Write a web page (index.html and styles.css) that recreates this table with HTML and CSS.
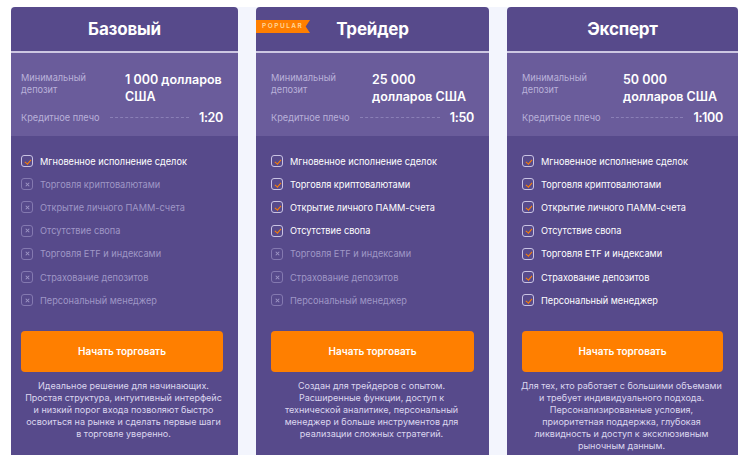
FILE: index.html
```html
<!DOCTYPE html>
<html lang="ru">
<head>
<meta charset="utf-8">
<link rel="stylesheet" href="styles.css">
</head>
<body>
<div class="plans">
  <div class="card">
    <div class="head"><h2>Базовый</h2></div>
    <div class="stats">
      <div class="row"><span class="lbl">Минимальный депозит</span><span class="val">1 000 долларов США</span></div>
      <div class="lev"><span class="lbl">Кредитное плечо</span><span class="dash"></span><span class="levv">1:20</span></div>
    </div>
    <ul class="feats">
      <li class="on"><span class="box"></span>Мгновенное исполнение сделок</li>
      <li><span class="box"></span>Торговля криптовалютами</li>
      <li><span class="box"></span>Открытие личного ПАММ-счета</li>
      <li><span class="box"></span>Отсутствие свопа</li>
      <li><span class="box"></span>Торговля ETF и индексами</li>
      <li><span class="box"></span>Страхование депозитов</li>
      <li><span class="box"></span>Персональный менеджер</li>
    </ul>
    <button class="btn">Начать торговать</button>
    <p class="desc">Идеальное решение для начинающих. Простая структура, интуитивный интерфейс и низкий порог входа позволяют быстро освоиться на рынке и сделать первые шаги в торговле уверенно.</p>
  </div>
  <div class="card wide">
    <div class="head"><span class="badge">POPULAR</span><h2>Трейдер</h2></div>
    <div class="stats">
      <div class="row"><span class="lbl">Минимальный депозит</span><span class="val">25 000 долларов США</span></div>
      <div class="lev"><span class="lbl">Кредитное плечо</span><span class="dash"></span><span class="levv">1:50</span></div>
    </div>
    <ul class="feats">
      <li class="on"><span class="box"></span>Мгновенное исполнение сделок</li>
      <li class="on"><span class="box"></span>Торговля криптовалютами</li>
      <li class="on"><span class="box"></span>Открытие личного ПАММ-счета</li>
      <li class="on"><span class="box"></span>Отсутствие свопа</li>
      <li><span class="box"></span>Торговля ETF и индексами</li>
      <li><span class="box"></span>Страхование депозитов</li>
      <li><span class="box"></span>Персональный менеджер</li>
    </ul>
    <button class="btn">Начать торговать</button>
    <p class="desc narrow">Создан для трейдеров с опытом. Расширенные функции, доступ к технической аналитике, персональный менеджер и больше инструментов для реализации сложных стратегий.</p>
  </div>
  <div class="card wide">
    <div class="head"><h2>Эксперт</h2></div>
    <div class="stats">
      <div class="row"><span class="lbl">Минимальный депозит</span><span class="val">50 000 долларов США</span></div>
      <div class="lev"><span class="lbl">Кредитное плечо</span><span class="dash"></span><span class="levv">1:100</span></div>
    </div>
    <ul class="feats">
      <li class="on"><span class="box"></span>Мгновенное исполнение сделок</li>
      <li class="on"><span class="box"></span>Торговля криптовалютами</li>
      <li class="on"><span class="box"></span>Открытие личного ПАММ-счета</li>
      <li class="on"><span class="box"></span>Отсутствие свопа</li>
      <li class="on"><span class="box"></span>Торговля ETF и индексами</li>
      <li class="on"><span class="box"></span>Страхование депозитов</li>
      <li class="on"><span class="box"></span>Персональный менеджер</li>
    </ul>
    <button class="btn">Начать торговать</button>
    <p class="desc">Для тех, кто работает с большими объемами и требует индивидуального подхода. Персонализированные условия, приоритетная поддержка, глубокая ликвидность и доступ к эксклюзивным рыночным данным.</p>
  </div>
</div>
</body>
</html>
```

FILE: styles.css
```css
* { box-sizing: border-box; }
html, body { margin: 0; padding: 0; background: #ffffff; }
body { padding: 7px 12px 0 11px; font-family: Inter, "Noto Sans", sans-serif; }
.plans {
  display: grid;
  grid-template-columns: 227px 233px 231px;
  gap: 18px;
  background: #f3f5fd;
  height: 448px;
}
.card {
  background: #574a8b;
  border-radius: 4px 4px 0 0;
  color: #fff;
  display: flex;
  flex-direction: column;
  overflow: hidden;
}
.head {
  position: relative;
  height: 46px;
  display: flex;
  align-items: center;
  justify-content: center;
  border-bottom: 2px solid #cdc7e2;
}
.head h2 {
  margin: 0;
  font-size: 17px;
  font-weight: 700;
  letter-spacing: -0.2px;
}
.badge {
  position: absolute;
  left: 0;
  top: 13px;
  height: 13px;
  width: 54px;
  background: #ff7f00;
  color: #ffd79c;
  font-size: 6.5px;
  font-weight: 600;
  letter-spacing: 1.5px;
  line-height: 13px;
  padding-left: 6px;
  clip-path: polygon(0 0, 100% 0, 92% 50%, 100% 100%, 0 100%);
}
.stats {
  background: #6a5c9b;
  padding: 18px 15px 0 10px;
  height: 83px;
}
.wide .stats { padding-left: 15px; }
.row { display: flex; }
.lbl {
  font-size: 9.2px;
  color: #b9b1d9;
  line-height: 12px;
  letter-spacing: 0;
}
.row .lbl { width: 104px; flex: none; padding-top: 1px; padding-right: 30px; }
.wide .row .lbl { width: 101px; padding-right: 27px; }
.val {
  font-size: 12.5px;
  font-weight: 600;
  line-height: 17px;
  letter-spacing: 0;
}
.lev {
  display: flex;
  align-items: center;
  margin-top: 5px;
}
.dash {
  flex: 1;
  border-top: 1px dashed #8a7fb6;
  margin: 0 10px 0 10px;
}
.levv { font-size: 12.5px; font-weight: 600; letter-spacing: -0.3px; }
.feats {
  list-style: none;
  margin: 0;
  padding: 13.5px 0 0 10px;
}
.wide .feats { padding-left: 15px; }
.feats li {
  display: flex;
  align-items: center;
  height: 23.2px;
  font-size: 9.2px;
  color: #9f97c6;
  letter-spacing: 0;
}
.feats li.on { color: #ffffff; }
.box {
  width: 12px;
  height: 12px;
  border: 1px solid #8479b0;
  border-radius: 3px;
  margin-right: 7px;
  position: relative;
  flex: none;
}
.feats li .box::before,
.feats li .box::after {
  content: "";
  position: absolute;
  left: 5px;
  top: 2.5px;
  width: 1px;
  height: 5px;
  background: #9f97c6;
  transform: rotate(45deg);
}
.feats li .box::after { transform: rotate(-45deg); }
.feats li.on .box { border-color: #c9c3e3; }
.feats li.on .box::before {
  left: 4px;
  top: 1.5px;
  width: 2.5px;
  height: 5px;
  background: none;
  border-right: 1.3px solid #ff7f00;
  border-bottom: 1.3px solid #ff7f00;
  transform: rotate(40deg);
}
.feats li.on .box::after { display: none; }
.btn {
  margin: 19px 15px 0 10px;
  height: 41px;
  flex: none;
  border: 0;
  border-radius: 4px;
  background: #ff7f00;
  color: #fff;
  font-family: inherit;
  font-size: 10px;
  font-weight: 600;
  letter-spacing: 0;
}
.wide .btn { margin-left: 15px; }
.desc {
  margin: 8px 14px 0 12px;
  text-align: center;
  font-size: 9px;
  line-height: 12px;
  color: #dcd7ef;
  letter-spacing: 0;
}
.desc.narrow { margin: 8px 24px 0 22px; }
```
